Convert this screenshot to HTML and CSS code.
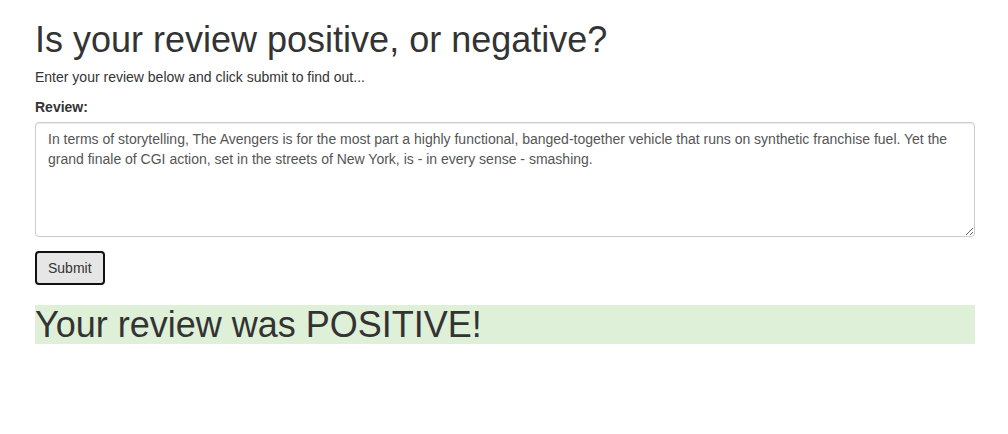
FILE: index.html
```html
<!DOCTYPE html>
<html>
<head>
<meta charset="utf-8">
<link rel="stylesheet" href="styles.css">
</head>
<body>
<div class="container">
  <h1 class="title">Is your review positive, or negative?</h1>
  <p class="intro">Enter your review below and click submit to find out...</p>
  <form class="form">
    <div class="form-group">
      <label class="label" for="review">Review:</label>
      <textarea class="form-control" id="review" rows="5">In terms of storytelling, The Avengers is for the most part a highly functional, banged-together vehicle that runs on synthetic franchise fuel. Yet the grand finale of CGI action, set in the streets of New York, is - in every sense - smashing.</textarea>
    </div>
    <button type="button" class="btn">Submit</button>
  </form>
  <h1 class="result">Your review was POSITIVE!</h1>
</div>
</body>
</html>
```

FILE: styles.css
```css
* { box-sizing: border-box; }
html, body { margin: 0; padding: 0; }
body {
  font-family: "Liberation Sans", Arial, sans-serif;
  font-size: 14px;
  line-height: 1.42857;
  color: #333;
  background: #fff;
}
.container {
  width: 970px;
  margin: 0 auto;
  padding: 0 14px 0 16px;
}
.title, .result {
  font-family: "Liberation Sans", Arial, sans-serif;
  font-weight: 500;
  font-size: 36px;
  line-height: 1.1;
}
.title { margin: 20px 0 8px; }
.intro { margin: 0 0 10px; }
.form { margin: 0; }
.form-group { margin-bottom: 14px; }
.label {
  display: inline-block;
  max-width: 100%;
  margin-bottom: 4px;
  font-weight: bold;
}
.form-control {
  display: block;
  width: 100%;
  height: 115px;
  padding: 7px 12px 5px;
  font-family: inherit;
  font-size: 14px;
  line-height: 1.42857;
  color: #555;
  background: #fff;
  border: 1px solid #ccc;
  border-radius: 4px;
  box-shadow: inset 0 1px 1px rgba(0,0,0,.075);
  resize: vertical;
  margin: 0;
}
.btn {
  display: inline-block;
  padding: 5px 11px;
  font-family: inherit;
  font-size: 14px;
  line-height: 20px;
  color: #333;
  background: #e6e6e6;
  border: 2px solid #111;
  border-radius: 4px;
  cursor: pointer;
  margin: 0;
}
.result {
  background: #dff0d8;
  margin: 20px 0 10px;
}
```
